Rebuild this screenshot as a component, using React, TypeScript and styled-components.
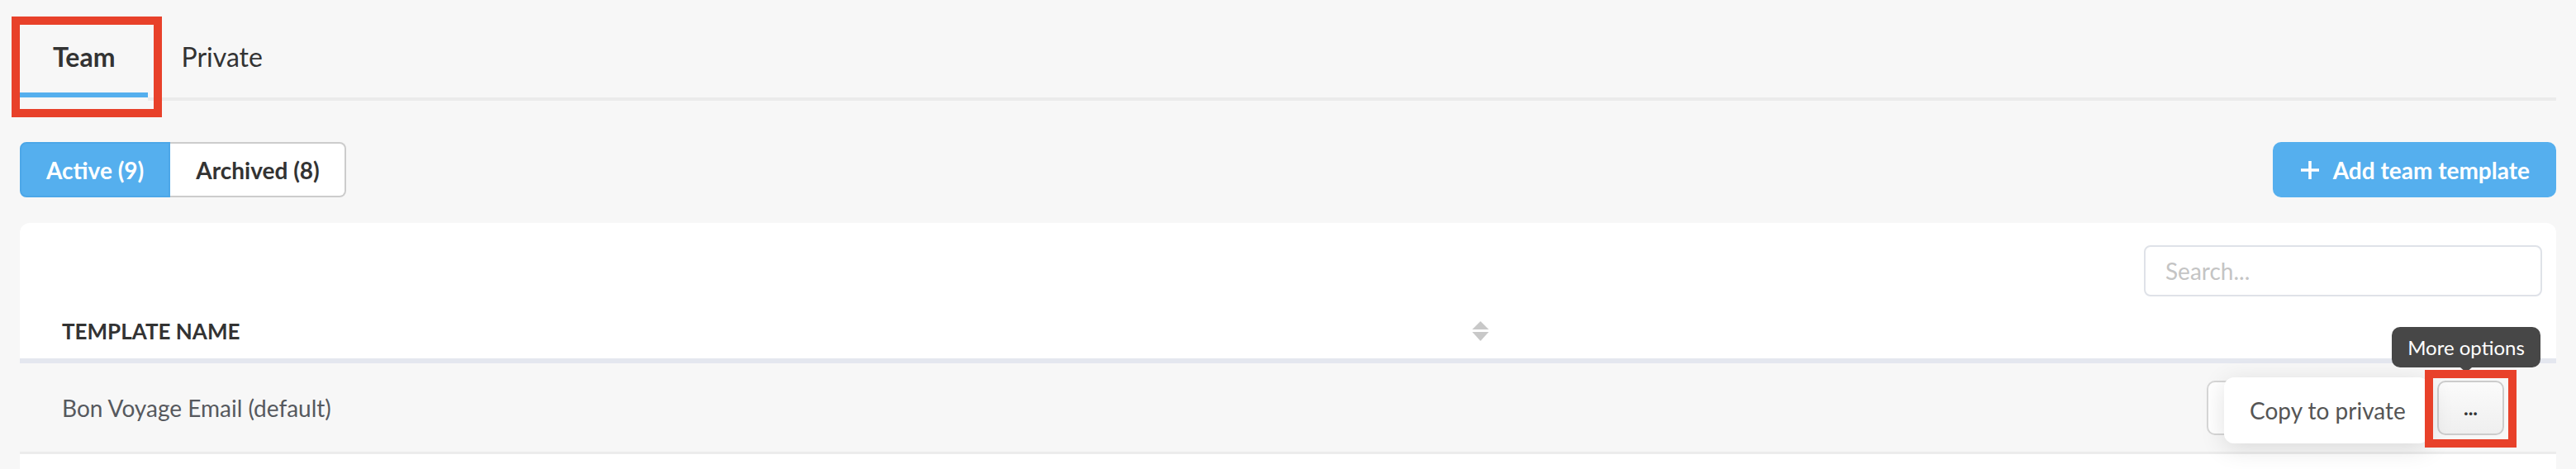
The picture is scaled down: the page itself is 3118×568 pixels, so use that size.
import React from "react";
import styled, { createGlobalStyle } from "styled-components";

const GlobalStyle = createGlobalStyle`
  html, body { margin: 0; padding: 0; background: #f7f7f7; }
  body { font-family: Lato, "Noto Sans", sans-serif; color: #333; }
  * { box-sizing: border-box; }
`;

const BLUE = "#55afee";
const RED = "#e8412a";

const Page = styled.div`
  width: 3118px;
  height: 568px;
  padding: 0 24px;
  overflow: hidden;
`;

const TabBar = styled.div`
  display: flex;
  border-bottom: 4px solid #ebebeb;
`;

const Tab = styled.div<{ $active?: boolean }>`
  position: relative;
  padding: 49px 40px 23px;
  font-size: 32px;
  line-height: 40px;
  font-weight: ${(p) => (p.$active ? 700 : 400)};
  color: #333;
  border-bottom: 6px solid ${(p) => (p.$active ? BLUE : "transparent")};
  box-shadow: ${(p) => (p.$active ? "0 4px 0 #f7f7f7" : "none")};
`;

const Highlight = styled.div<{ $top: number; $left: number; $w: number; $h: number }>`
  position: absolute;
  top: ${(p) => p.$top}px;
  left: ${(p) => p.$left}px;
  width: ${(p) => p.$w}px;
  height: ${(p) => p.$h}px;
  border: 10px solid ${RED};
  pointer-events: none;
  z-index: 5;
`;

const Toolbar = styled.div`
  margin-top: 50px;
  display: flex;
  justify-content: space-between;
  align-items: center;
  height: 67px;
`;

const SegGroup = styled.div`
  display: flex;
`;

const SegButton = styled.button<{ $active?: boolean; $pos: "first" | "last" }>`
  height: 67px;
  padding: 0 30px;
  font-family: Lato, sans-serif;
  font-size: 28px;
  font-weight: 700;
  cursor: pointer;
  background: ${(p) => (p.$active ? BLUE : "#fff")};
  color: ${(p) => (p.$active ? "#fff" : "#333")};
  border: 2px solid ${(p) => (p.$active ? "#4ca7e8" : "#cccccc")};
  border-radius: ${(p) => (p.$pos === "first" ? "8px 0 0 8px" : "0 8px 8px 0")};
  ${(p) => (p.$pos === "last" ? "border-left: none; padding-left: 31px;" : "")}
`;

const AddButton = styled.button`
  height: 67px;
  padding: 0 32px 0 33px;
  display: flex;
  align-items: center;
  gap: 16px;
  background: ${BLUE};
  color: #fff;
  border: none;
  border-radius: 10px;
  font-family: Lato, sans-serif;
  font-size: 28px;
  font-weight: 700;
  cursor: pointer;
`;

const Card = styled.div`
  margin-top: 31px;
  background: #fff;
  border-radius: 12px 12px 0 0;
  height: 298px;
`;

const SearchRow = styled.div`
  display: flex;
  justify-content: flex-end;
  padding: 27px 17px 0 0;
`;

const SearchInput = styled.input`
  width: 482px;
  height: 62px;
  border: 2px solid #dfe2e8;
  border-radius: 8px;
  padding: 0 24px;
  font-family: Lato, sans-serif;
  font-size: 28px;
  color: #333;
  outline: none;
  &::placeholder { color: #c4c4c4; }
`;

const HeaderRow = styled.div`
  display: grid;
  grid-template-columns: 1796px 1fr;
  border-bottom: 6px solid #e4e7ef;
`;

const HeaderCell = styled.div`
  display: flex;
  align-items: center;
  justify-content: space-between;
  padding: 26px 18px 17px 51px;
  font-size: 26px;
  line-height: 32px;
  font-weight: 700;
  text-transform: uppercase;
  color: #333;
`;

const Row = styled.div`
  display: flex;
  align-items: center;
  justify-content: space-between;
  height: 110px;
  padding: 0 63px 0 51px;
  background: #f7f7f7;
  border-bottom: 3px solid #ececec;
`;

const RowName = styled.div`
  font-size: 28px;
  line-height: 36px;
  color: #56595e;
`;

const Actions = styled.div`
  display: flex;
  align-items: center;
  gap: 16px;
`;

const GhostButton = styled.button`
  width: 263px;
  height: 66px;
  border: 2px solid #d6d6d6;
  border-radius: 10px;
  background: #fff;
`;

const MoreWrap = styled.div`
  position: relative;
`;

const MoreButton = styled.button`
  width: 81px;
  height: 66px;
  border: 2px solid #cccccc;
  border-radius: 10px;
  background: linear-gradient(#fbfbfb, #efefef);
  font-family: Lato, sans-serif;
  font-size: 24px;
  font-weight: 700;
  color: #333;
  display: flex;
  align-items: center;
  justify-content: center;
  padding: 0;
  cursor: pointer;
`;

const Menu = styled.div`
  position: absolute;
  top: -4px;
  right: calc(100% + 10px);
  width: 248px;
  height: 80px;
  display: flex;
  align-items: center;
  padding-left: 31px;
  background: #fff;
  border-radius: 12px;
  box-shadow: 0 6px 30px rgba(0, 0, 0, 0.12);
  font-size: 28px;
  color: #555;
  white-space: nowrap;
  z-index: 3;
`;

const Tooltip = styled.div`
  position: absolute;
  top: -65px;
  left: -55px;
  width: 180px;
  height: 49px;
  display: flex;
  align-items: center;
  justify-content: center;
  background: #474747;
  color: #fff;
  border-radius: 10px;
  font-size: 24px;
  white-space: nowrap;
  z-index: 4;
  &::after {
    content: "";
    position: absolute;
    left: 50%;
    bottom: -6px;
    margin-left: -7px;
    border-left: 7px solid transparent;
    border-right: 7px solid transparent;
    border-top: 6px solid #474747;
  }
`;

const PlusIcon = () => (
  <svg width="24" height="24" viewBox="0 0 24 24">
    <path d="M12 1v22M1 12h22" stroke="#fff" strokeWidth="3.6" fill="none" />
  </svg>
);

const SortIcon = () => (
  <svg width="20" height="24" viewBox="0 0 20 24">
    <polygon points="0,10 10,0 20,10" fill="#c8c8c8" />
    <polygon points="0,13 20,13 10,24" fill="#c8c8c8" />
  </svg>
);

export default function App() {
  return (
    <>
      <GlobalStyle />
      <Page>
        <TabBar>
          <Tab $active>
            Team
            <Highlight $top={20} $left={-10} $w={182} $h={122} />
          </Tab>
          <Tab>Private</Tab>
        </TabBar>

        <Toolbar>
          <SegGroup>
            <SegButton $active $pos="first">Active (9)</SegButton>
            <SegButton $pos="last">Archived (8)</SegButton>
          </SegGroup>
          <AddButton>
            <PlusIcon />
            Add team template
          </AddButton>
        </Toolbar>

        <Card>
          <SearchRow>
            <SearchInput placeholder="Search..." />
          </SearchRow>
          <HeaderRow>
            <HeaderCell>
              Template name
              <SortIcon />
            </HeaderCell>
            <div />
          </HeaderRow>
          <Row>
            <RowName>Bon Voyage Email (default)</RowName>
            <Actions>
              <GhostButton aria-label="Use template" />
              <MoreWrap>
                <Tooltip>More options</Tooltip>
                <Menu>Copy to private</Menu>
                <MoreButton>...</MoreButton>
                <Highlight $top={-13} $left={-15} $w={111} $h={94} />
              </MoreWrap>
            </Actions>
          </Row>
        </Card>
      </Page>
    </>
  );
}
